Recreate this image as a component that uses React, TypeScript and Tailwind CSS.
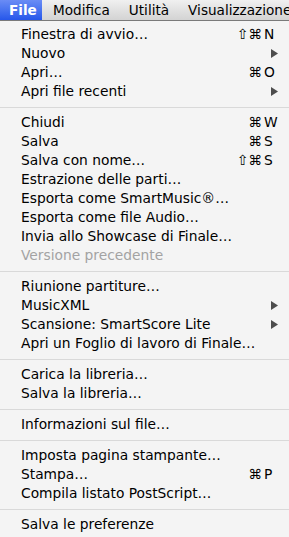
import React from "react";

type Item =
  | { sep: true }
  | { label: string; mods?: string; key?: string; sub?: boolean; disabled?: boolean; sep?: false };

const items: Item[] = [
  { label: "Finestra di avvio…", mods: "⇧⌘", key: "N" },
  { label: "Nuovo", sub: true },
  { label: "Apri…", mods: "⌘", key: "O" },
  { label: "Apri file recenti", sub: true },
  { sep: true },
  { label: "Chiudi", mods: "⌘", key: "W" },
  { label: "Salva", mods: "⌘", key: "S" },
  { label: "Salva con nome…", mods: "⇧⌘", key: "S" },
  { label: "Estrazione delle parti…" },
  { label: "Esporta come SmartMusic®…" },
  { label: "Esporta come file Audio…" },
  { label: "Invia allo Showcase di Finale…" },
  { label: "Versione precedente", disabled: true },
  { sep: true },
  { label: "Riunione partiture…" },
  { label: "MusicXML", sub: true },
  { label: "Scansione: SmartScore Lite", sub: true },
  { label: "Apri un Foglio di lavoro di Finale…" },
  { sep: true },
  { label: "Carica la libreria…" },
  { label: "Salva la libreria…" },
  { sep: true },
  { label: "Informazioni sul file…" },
  { sep: true },
  { label: "Imposta pagina stampante…" },
  { label: "Stampa…", mods: "⌘", key: "P" },
  { label: "Compila listato PostScript…" },
  { sep: true },
  { label: "Salva le preferenze" },
];

function Arrow() {
  return (
    <svg width="7" height="9" viewBox="0 0 7 9" className="block">
      <polygon points="0,0 7,4.5 0,9" fill="#4d4d4d" />
    </svg>
  );
}

export default function App() {
  return (
    <div
      className="w-[289px] h-[537px] overflow-hidden bg-[#f4f4f4] text-black"
      style={{ fontFamily: '"DejaVu Sans", sans-serif' }}
    >
      <div className="h-[21px] flex items-stretch whitespace-nowrap overflow-hidden bg-gradient-to-b from-[#f0f0f0] to-[#d3d3d3] border-b border-[#7a7a7a] text-[13.6px] leading-[20px]">
        <div className="w-[42px] shrink-0 pl-[9px] font-bold text-white bg-gradient-to-b from-[#6a8cf5] to-[#2656ea]">
          File
        </div>
        <div className="ml-[11px] shrink-0">Modifica</div>
        <div className="ml-[19px] shrink-0">Utilità</div>
        <div className="ml-[19px] shrink-0">Visualizzazione</div>
      </div>
      <div className="pt-[4px] text-[13.8px] leading-[19px]">
        {items.map((it, i) =>
          it.sep ? (
            <div key={i} className="h-[12px] flex items-center">
              <div className="w-full h-px bg-[#d9d9d9]" />
            </div>
          ) : (
            <div
              key={i}
              className={`h-[19px] flex items-center justify-between pl-[21px] pr-[11px] whitespace-nowrap ${
                it.disabled ? "text-[#a3a3a3]" : "text-black"
              }`}
            >
              <span>{it.label}</span>
              {it.sub ? (
                <Arrow />
              ) : it.key ? (
                <span className="flex items-center">
                  <span className="text-right">{it.mods}</span>
                  <span className="w-[16px] pl-[2px] text-left">{it.key}</span>
                </span>
              ) : null}
            </div>
          )
        )}
      </div>
    </div>
  );
}
